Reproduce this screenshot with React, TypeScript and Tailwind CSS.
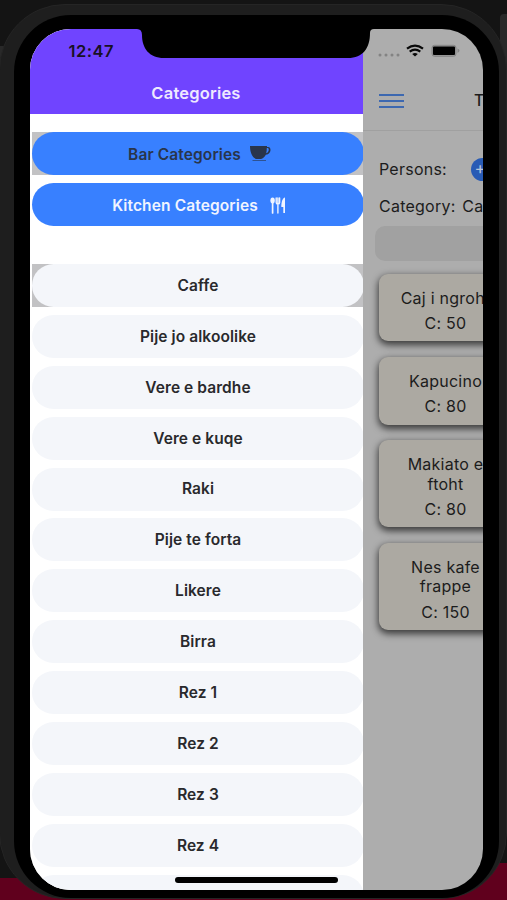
import type { ReactNode } from "react";

const categories = [
  "Caffe", "Pije jo alkoolike", "Vere e bardhe", "Vere e kuqe", "Raki", "Pije te forta",
  "Likere", "Birra", "Rez 1", "Rez 2", "Rez 3", "Rez 4",
];

const products = [
  { lines: ["Caj i ngroht"], price: "C: 50" },
  { lines: ["Kapucino"], price: "C: 80" },
  { lines: ["Makiato e", "ftoht"], price: "C: 80" },
  { lines: ["Nes kafe", "frappe"], price: "C: 150" },
];

function CupIcon() {
  return (
    <svg className="ml-[9px] h-[17px] w-[21px]" viewBox="0 0 21 17">
      <path d="M0 0h17v1h1.200c3.400 0 3.400 7.200-2.400 7.700-1 2.300-3 3.600-4.800 4.300H6C2.800 11.500 0 7.500 0 0Zm16.800 2.100c0 1.900-.2 3.600-.6 5.200 3-.8 3.100-5.200 1.600-5.200Z" fill="currentColor" />
      <path d="M2.500 14.500h13.500" stroke="currentColor" strokeWidth="1" opacity=".6" />
    </svg>
  );
}

function CutleryIcon() {
  return (
    <svg className="ml-[12px] h-[17px] w-[16px]" viewBox="0 0 16 17">
      <ellipse cx="2.600" cy="3.500" rx="2.200" ry="3" fill="currentColor" />
      <path d="M2.600 5v11" stroke="currentColor" strokeWidth="1.700" strokeLinecap="round" />
      <path d="M6.200 1v4.500q0 1.500 1.700 1.500T9.600 5.500V1M7.900 1v15" fill="none" stroke="currentColor" strokeWidth="1.400" strokeLinecap="round" />
      <path d="M15 .5V16h-1.700v-6h-2C11.400 5 12.400 1 15 .5Z" fill="currentColor" />
    </svg>
  );
}

function MenuButton({ children, selected }: { children: ReactNode; selected?: boolean }) {
  return (
    <div className={selected ? "h-[43px] shrink-0 bg-[#c2c2c4]" : "h-[43px] shrink-0"}>
      <button className="flex h-full w-full items-center justify-center rounded-[22px] bg-[#f4f6fa] pl-px text-[15.500px] font-semibold tracking-[0.080px] text-[#29292c]">
        {children}
      </button>
    </div>
  );
}

function StatusIcons() {
  return (
    <svg className="h-[14px] w-[84px]" viewBox="0 0 84 14">
      <g fill="#838383">
        <circle cx="3" cy="11" r="1.500" /><circle cx="9" cy="11" r="1.500" />
        <circle cx="15" cy="11" r="1.500" /><circle cx="21" cy="11" r="1.500" />
      </g>
      <g fill="none" stroke="#080808" strokeWidth="2.200">
        <path d="M30 4.700q8-6 16 0M32.700 7.600q5.300-4 10.600 0" />
      </g>
      <path d="M35.200 9.900q2.800-2 5.600 0L38 12.500Z" fill="#080808" />
      <rect x="55" y="1.300" width="24" height="11" rx="2.500" fill="#999" stroke="#858585" />
      <rect x="56" y="2.500" width="22" height="8.600" rx="1" fill="#000" />
      <path d="M80.500 4.500q4 2.200 0 4.400Z" fill="#858585" />
    </svg>
  );
}

export default function App() {
  return (
    <main className="relative h-[900px] w-[507px] overflow-hidden bg-[#141414] font-['Inter','Liberation_Sans',sans-serif]">
      <div className="absolute left-0 top-[878px] h-[22px] w-[254px] bg-[#60001d]" />
      <div className="absolute left-[254px] top-[863px] h-[37px] w-[253px] bg-[#60001d]" />
      <div className="absolute left-[-4px] top-[46px] h-9 w-6 rounded bg-[#292929]" />
      <div className="absolute left-[500px] top-[14px] h-14 w-6 rounded-l bg-[#292929]" />
      <div className="absolute -left-px top-[4px] h-[895px] w-[508px] rounded-[66px] border border-[#252525] bg-[#1e1e1e]" />
      <div className="absolute left-[14px] top-[15px] h-[883px] w-[485px] rounded-[57px] bg-black" />
      <div className="absolute left-[29.500px] top-[29px] flex h-[861px] w-[453.500px] overflow-hidden rounded-[41px] bg-[#adadad]">
        <section className="flex w-[333px] shrink-0 flex-col overflow-hidden bg-white">
          <header className="h-[85px] shrink-0 bg-[#7044ff]">
            <div className="ml-[39px] pt-[12px] text-[16.500px] font-semibold leading-[20px] tracking-[0.500px] text-[#181025]">12:47</div>
            <h1 className="mt-[22px] text-center text-[16.500px] font-semibold leading-[20px] tracking-[0.200px] text-[#eee9ff]">Categories</h1>
          </header>
          <nav className="ml-[2px] mt-[18px] flex w-[332px] shrink-0 flex-col gap-2 text-[15.500px] font-semibold tracking-[0.120px]">
            <div className="h-[43px] bg-[#c2c2c4]">
              <button className="flex h-full w-full items-center justify-center rounded-[22px] bg-[#3880ff] pl-[4px] pt-[2px] text-[#29354b]">
                <span>Bar Categories</span><CupIcon />
              </button>
            </div>
            <button className="flex h-[43px] w-full items-center justify-center rounded-[22px] bg-[#3880ff] pl-[3px] pt-[2px] text-[#f0f4ff]">
              <span>Kitchen Categories</span><CutleryIcon />
            </button>
          </nav>
          <div className="ml-[2px] mt-[38px] flex w-[332px] shrink-0 flex-col gap-[7.900px]">
            {categories.map((name, index) => (
              <MenuButton key={name} selected={index === 0}>{name}</MenuButton>
            ))}
            <div className="h-[43px] shrink-0 rounded-[22px] bg-[#f4f6fa]" />
          </div>
        </section>
        <section className="w-[133px] shrink-0 tracking-[0.240px] text-[#1c1c1c]">
          <header className="h-[102px] border-b border-[#a0a0a0]">
            <div className="ml-[14.500px] flex pt-[15px]"><StatusIcons /></div>
            <div className="ml-[16.500px] mt-[34px] flex items-center">
              <div className="flex w-[25px] shrink-0 flex-col gap-[4px] py-[2px]">
                <div className="h-[2px] bg-[#3d68b0]" />
                <div className="h-[2px] bg-[#3d68b0]" />
                <div className="h-[2px] bg-[#3d68b0]" />
              </div>
              <span className="ml-[70px] shrink-0 text-[15.500px] font-medium leading-[18px]">T</span>
            </div>
          </header>
          <div className="ml-[16.500px] mt-[26px] flex h-[24px] items-center whitespace-nowrap text-[16px]">
            <span className="w-[91.500px] shrink-0">Persons:</span>
            <span className="flex h-[23px] w-[23px] shrink-0 items-center rounded-full bg-[#285bb5] pl-[4px] text-[17px] text-[#b8c5dc]">+</span>
          </div>
          <div className="ml-[16.500px] mt-[13px] h-[24px] whitespace-nowrap text-[16px] leading-[24px] [word-spacing:2px]">Category: Caffe</div>
          <div className="ml-[12.500px] mt-[8px] h-[35px] w-[140px] rounded-[10px] bg-[#a1a1a1]" />
          <div className="ml-[16.500px] mt-[12.500px] flex w-[133px] flex-col gap-[15.700px]">
            {products.map((product) => (
              <article key={product.lines[0]} className="rounded-[9px] bg-[#aca9a2] pb-[7px] pt-[15px] text-center text-[16px] shadow-[0_3px_7px_1px_rgba(0,0,0,0.65)]">
                {product.lines.map((line) => <div key={line} className="whitespace-nowrap leading-[19.400px]">{line}</div>)}
                <div className="mt-[5px] leading-[21.300px]">{product.price}</div>
              </article>
            ))}
          </div>
        </section>
      </div>
      <svg className="absolute left-[134px] top-[28px] h-[32px] w-[244px]" viewBox="0 0 244 32">
        <path d="M0 0H244V1h-4q-4 0-4 4c0 15-7 25-22 25H30C15 30 8 20 8 7q0-6-5-6H0Z" fill="#000" />
      </svg>
      <div className="absolute left-[175px] top-[877px] h-[5.500px] w-[163px] rounded-full bg-black" />
    </main>
  );
}
